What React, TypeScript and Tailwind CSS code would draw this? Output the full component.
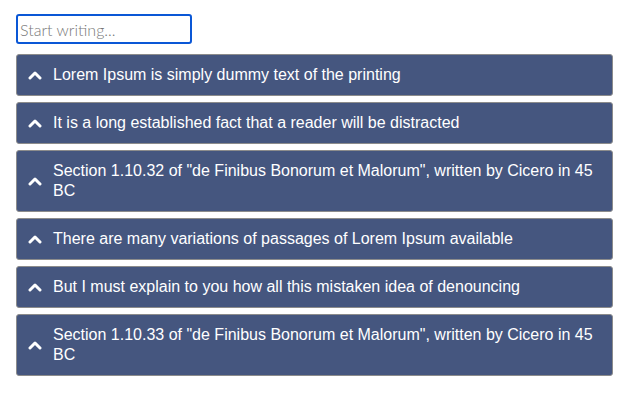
import React from "react";

const items = [
  "Lorem Ipsum is simply dummy text of the printing",
  "It is a long established fact that a reader will be distracted",
  'Section 1.10.32 of "de Finibus Bonorum et Malorum", written by Cicero in 45 BC',
  "There are many variations of passages of Lorem Ipsum available",
  "But I must explain to you how all this mistaken idea of denouncing",
  'Section 1.10.33 of "de Finibus Bonorum et Malorum", written by Cicero in 45 BC',
];

function Chevron() {
  return (
    <svg width="14" height="10" viewBox="0 0 14 10" className="shrink-0">
      <path d="M2 8 L7 3 L12 8" fill="none" stroke="white" strokeWidth="3" strokeLinecap="round" strokeLinejoin="round" />
    </svg>
  );
}

export default function App() {
  return (
    <div className="min-h-[412px] w-[631px] bg-white pt-[14px] pl-4 pr-[18px]" style={{ fontFamily: '"Liberation Sans", Arial, sans-serif' }}>
      <input
        autoFocus
        placeholder="Start writing..."
        className="block w-[176px] h-[30px] rounded-[3px] border-2 border-[#0a57d6] px-[2px] text-[16px] font-light text-gray-700 placeholder:text-[#777777] outline-none"
        style={{ fontFamily: 'Lato, "Open Sans", sans-serif' }}
      />
      <div className="mt-[10px] flex flex-col gap-[6px]">
        {items.map((t) => (
          <div
            key={t}
            className="flex items-center rounded-[3px] border border-[#8c8c8c] bg-[#45567f] py-[10px] pl-[11px] pr-[16px] text-white"
          >
            <Chevron />
            <span className="ml-[11px] text-[16px] leading-[20px]">{t}</span>
          </div>
        ))}
      </div>
    </div>
  );
}
